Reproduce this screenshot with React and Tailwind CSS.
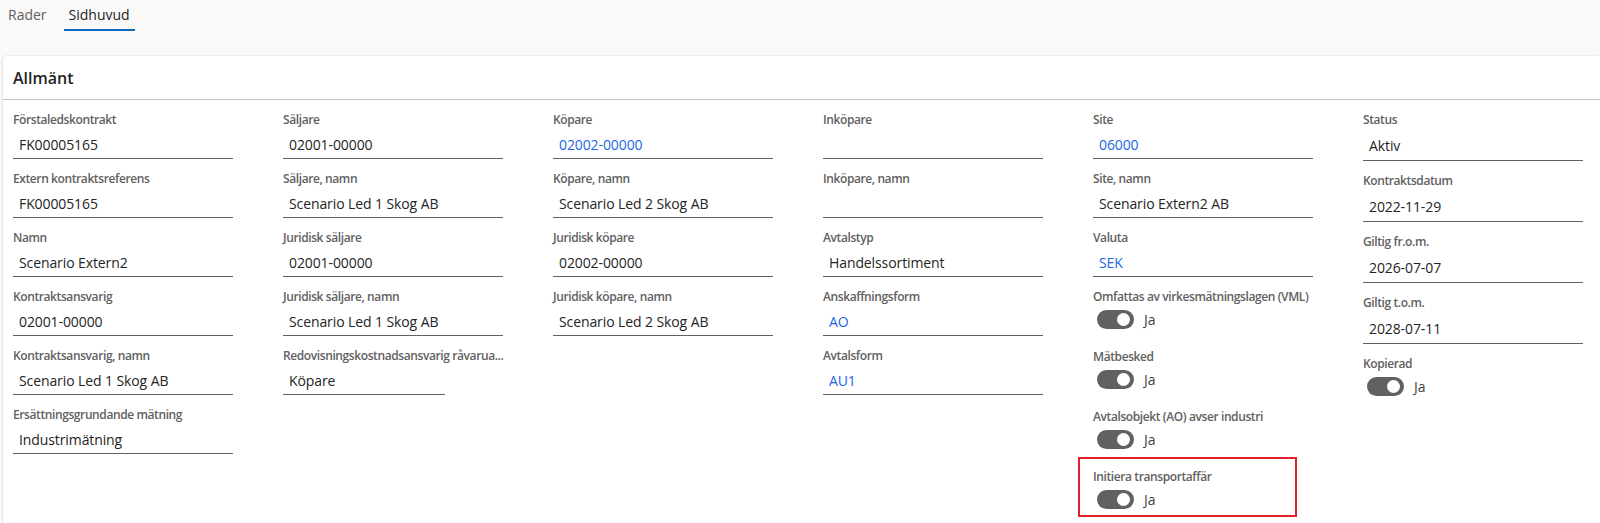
import React from "react";

const font = { fontFamily: '"Open Sans", "Noto Sans", sans-serif' };

const columns = [
  [
    { label: "Förstaledskontrakt", value: "FK00005165" },
    { label: "Extern kontraktsreferens", value: "FK00005165" },
    { label: "Namn", value: "Scenario Extern2" },
    { label: "Kontraktsansvarig", value: "02001-00000" },
    { label: "Kontraktsansvarig, namn", value: "Scenario Led 1 Skog AB" },
    { label: "Ersättningsgrundande mätning", value: "Industrimätning" },
  ],
  [
    { label: "Säljare", value: "02001-00000" },
    { label: "Säljare, namn", value: "Scenario Led 1 Skog AB" },
    { label: "Juridisk säljare", value: "02001-00000" },
    { label: "Juridisk säljare, namn", value: "Scenario Led 1 Skog AB" },
    { label: "Redovisningskostnadsansvarig råvarua...", value: "Köpare", short: true },
  ],
  [
    { label: "Köpare", value: "02002-00000", link: true },
    { label: "Köpare, namn", value: "Scenario Led 2 Skog AB" },
    { label: "Juridisk köpare", value: "02002-00000" },
    { label: "Juridisk köpare, namn", value: "Scenario Led 2 Skog AB" },
  ],
  [
    { label: "Inköpare", value: "" },
    { label: "Inköpare, namn", value: "" },
    { label: "Avtalstyp", value: "Handelssortiment" },
    { label: "Anskaffningsform", value: "AO", link: true },
    { label: "Avtalsform", value: "AU1", link: true },
  ],
  [
    { label: "Site", value: "06000", link: true },
    { label: "Site, namn", value: "Scenario Extern2 AB" },
    { label: "Valuta", value: "SEK", link: true },
    { label: "Omfattas av virkesmätningslagen (VML)", toggle: true },
    { label: "Mätbesked", toggle: true },
    { label: "Avtalsobjekt (AO) avser industri", toggle: true },
    { label: "Initiera transportaffär", toggle: true, marked: true },
  ],
  [
    { label: "Status", value: "Aktiv" },
    { label: "Kontraktsdatum", value: "2022-11-29" },
    { label: "Giltig fr.o.m.", value: "2026-07-07" },
    { label: "Giltig t.o.m.", value: "2028-07-11" },
    { label: "Kopierad", toggle: true },
  ],
];

function Toggle() {
  return (
    <div className="flex h-[40px] items-start pl-[4px] pt-[3px]">
      <div className="flex h-[19px] w-[37px] items-center justify-end rounded-full bg-[#616161] pr-[4px]">
        <div className="h-[13px] w-[13px] rounded-full bg-white" />
      </div>
      <span className="ml-[10px] text-[14px] leading-[19px] text-[#424242]">Ja</span>
    </div>
  );
}

function Field({ f, tall }) {
  return (
    <div className="relative">
      {f.marked && (
        <div className="absolute left-[-15px] top-[-10px] h-[60px] w-[219px] border-2 border-[#e3202a]" />
      )}
      <div className="h-5 whitespace-nowrap text-[12px] font-semibold leading-5 tracking-[-0.4px] text-[#616161]">
        {f.label}
      </div>
      {f.toggle ? (
        <Toggle />
      ) : (
        <div
          className={`${tall ? "h-[31px] pt-[6px]" : "h-[29px] pt-[5px]"} ${
            f.short ? "w-[162px]" : "w-full"
          } mb-[10px] border-b border-[#616161] pl-[6px] text-[14px] leading-5 tracking-[-0.1px] ${
            f.link ? "text-[#2266e3]" : "text-[#242424]"
          }`}
        >
          {f.value}
        </div>
      )}
    </div>
  );
}

export default function App() {
  return (
    <div style={font} className="flex h-[523px] flex-col overflow-hidden bg-[#faf9f8]">
      <div className="flex gap-[12px] pl-[3px]">
        <div className="px-[5px] pt-[5px] pb-[6px] text-[14px] leading-5 text-[#616161]">Rader</div>
        <div className="border-b-2 border-[#0f6cbd] px-[5px] pt-[5px] pb-[4px] text-[14px] leading-5 text-[#242424]">
          Sidhuvud
        </div>
      </div>
      <div className="ml-[3px] mt-[25px] flex-1 rounded-tl-[4px] bg-white shadow-[0_0_2px_rgba(0,0,0,0.14),0_1px_3px_rgba(0,0,0,0.1)]">
        <div className="flex h-[44px] items-center border-b border-[#c8c6c4] pl-[10px] text-[16px] font-semibold text-[#242424]">
          Allmänt
        </div>
        <div className="flex gap-[50px] pl-[10px] pt-[10px]">
          {columns.map((col, i) => (
            <div key={i} className="flex w-[220px] flex-col">
              {col.map((f) => (
                <Field key={f.label} f={f} tall={i === 5} />
              ))}
            </div>
          ))}
        </div>
      </div>
    </div>
  );
}
